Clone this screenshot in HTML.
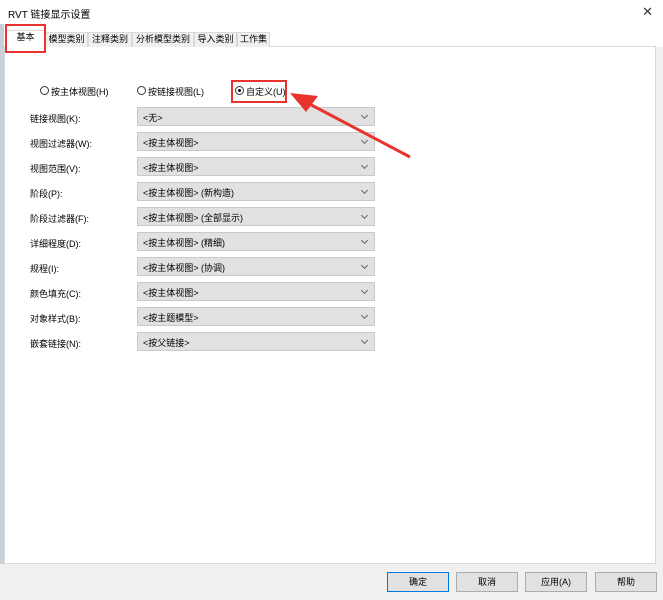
<!DOCTYPE html>
<html><head><meta charset="utf-8"><style>
*{margin:0;padding:0;box-sizing:border-box}
body{width:663px;height:600px;background:#f0f0f0;position:relative;overflow:hidden;font-family:"Liberation Sans","Noto Sans CJK SC",sans-serif;font-size:9px;color:#000}
.a{position:absolute}
.title{left:0;top:0;width:663px;height:47px;background:#fff;font-size:10px;padding:6px 0 0 8px}
.close{right:10px;top:4px;font-size:13px;color:#333}
.panel{left:4px;top:46px;width:652px;height:518px;background:#fff;border:1px solid #d9d9d9}
.tab{top:32px;height:15px;background:#f0f0f0;border:1px solid #d9d9d9;border-bottom:none;font-size:9px;text-align:center;line-height:13px}
.lab{left:30px;font-size:9px}
.dd{left:137px;width:238px;height:19px;background:#e1e1e1;border:1px solid #c9c9c9;font-size:9px;padding:3px 0 0 5px}
.dd:after{content:"";position:absolute;right:7px;top:5px;width:4px;height:4px;border-right:1px solid #666;border-bottom:1px solid #666;transform:rotate(45deg)}
.rad{width:9px;height:9px;border:1px solid #333;border-radius:50%;background:#fff}
.btn{top:572px;width:62px;height:20px;background:#e1e1e1;border:1px solid #adadad;text-align:center;line-height:18px;font-size:9px}
.red{border:2px solid #e8332e}
</style></head><body>
<div class="a title">RVT 链接显示设置</div>
<div class="a" style="left:0;top:24px;width:4px;height:540px;background:#c8d0d8"></div>
<div class="a close">✕</div>
<div class="a panel"></div>
<div class="a tab" style="left:6px;width:39px;height:17px;top:30px;background:#fff">基本</div>
<div class="a tab" style="left:45px;width:43px">模型类别</div>
<div class="a tab" style="left:88px;width:44px">注释类别</div>
<div class="a tab" style="left:132px;width:62px">分析模型类别</div>
<div class="a tab" style="left:194px;width:43px">导入类别</div>
<div class="a tab" style="left:237px;width:33px">工作集</div>
<div class="a red" style="left:5px;top:24px;width:41px;height:29px"></div>

<div class="a rad" style="left:40px;top:86px"></div><div class="a" style="left:51px;top:85px">按主体视图(H)</div>
<div class="a rad" style="left:137px;top:86px"></div><div class="a" style="left:148px;top:85px">按链接视图(L)</div>
<div class="a rad" style="left:235px;top:86px"><div class="a" style="left:2px;top:2px;width:3px;height:3px;border-radius:50%;background:#000"></div></div><div class="a" style="left:246px;top:85px">自定义(U)</div>
<div class="a red" style="left:231px;top:80px;width:56px;height:23px"></div>

<div class="a lab" style="top:112px">链接视图(K):</div><div class="a dd" style="top:107px">&lt;无&gt;</div>
<div class="a lab" style="top:137px">视图过滤器(W):</div><div class="a dd" style="top:132px">&lt;按主体视图&gt;</div>
<div class="a lab" style="top:162px">视图范围(V):</div><div class="a dd" style="top:157px">&lt;按主体视图&gt;</div>
<div class="a lab" style="top:187px">阶段(P):</div><div class="a dd" style="top:182px">&lt;按主体视图&gt; (新构造)</div>
<div class="a lab" style="top:212px">阶段过滤器(F):</div><div class="a dd" style="top:207px">&lt;按主体视图&gt; (全部显示)</div>
<div class="a lab" style="top:237px">详细程度(D):</div><div class="a dd" style="top:232px">&lt;按主体视图&gt; (精细)</div>
<div class="a lab" style="top:262px">规程(I):</div><div class="a dd" style="top:257px">&lt;按主体视图&gt; (协调)</div>
<div class="a lab" style="top:287px">颜色填充(C):</div><div class="a dd" style="top:282px">&lt;按主体视图&gt;</div>
<div class="a lab" style="top:312px">对象样式(B):</div><div class="a dd" style="top:307px">&lt;按主题模型&gt;</div>
<div class="a lab" style="top:337px">嵌套链接(N):</div><div class="a dd" style="top:332px">&lt;按父链接&gt;</div>

<svg class="a" style="left:0;top:0" width="663" height="600"><line x1="410" y1="157" x2="302" y2="100" stroke="#e8332e" stroke-width="3"/><polygon points="290,93 318,96 306,112" fill="#e8332e"/></svg>

<div class="a btn" style="left:387px;border-color:#0078d7">确定</div>
<div class="a btn" style="left:456px">取消</div>
<div class="a btn" style="left:525px">应用(A)</div>
<div class="a btn" style="left:595px">帮助</div>
</body></html>
